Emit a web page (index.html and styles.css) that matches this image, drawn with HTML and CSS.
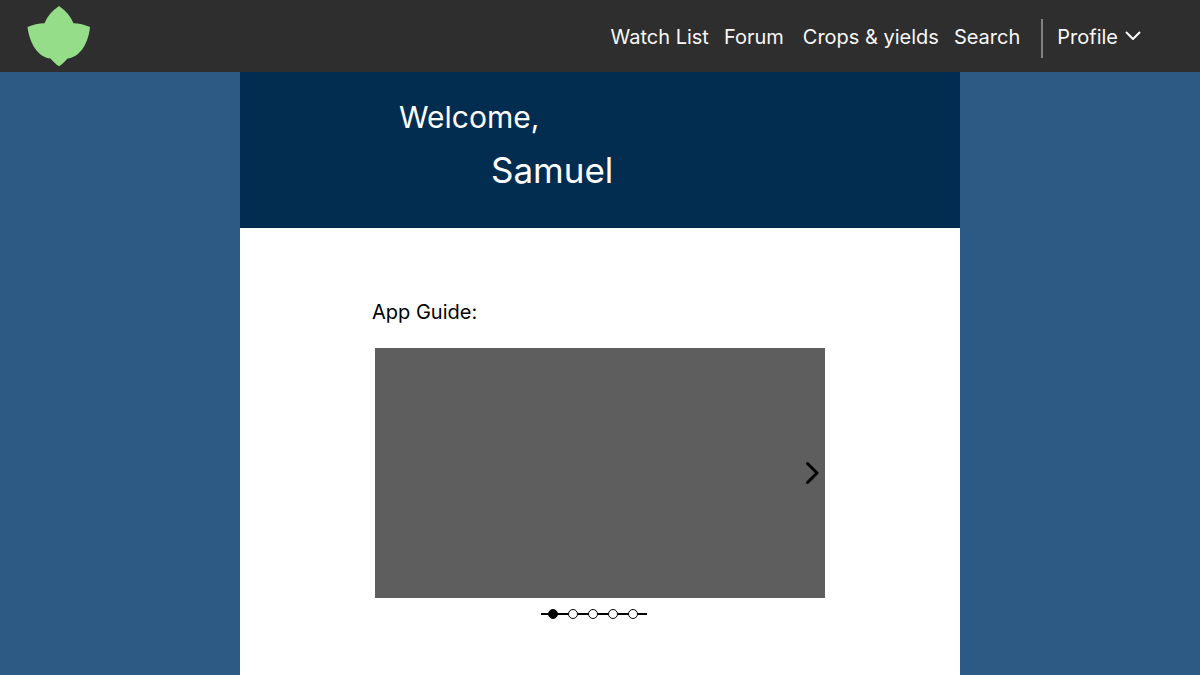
FILE: index.html
```html
<!DOCTYPE html>
<html lang="en">
<head>
<meta charset="utf-8">
<title>Home</title>
<link rel="stylesheet" href="styles.css">
</head>
<body>
<header class="topbar">
  <a class="logo" href="#" aria-label="Home">
    <svg width="64" height="62" viewBox="0 0 64 62" aria-hidden="true"><path fill="#95dd88" d="M32 0C39 5 43.500 10 46.500 17.300C52 17.500 57.500 18.800 63 21C61.500 37 53 51.500 40.500 52.500C38 55.500 35 58.500 32 60.300C29 58.500 26 55.500 23.500 52.500C11 51.500 2.500 37 .500 21C6 18.800 11.500 17.500 17.500 17.300C20.500 10 25 5 32 0Z"/></svg>
  </a>
  <nav class="nav">
    <a class="nav-link" href="#">Watch List</a>
    <a class="nav-link nav-link-forum" href="#">Forum</a>
    <a class="nav-link" href="#">Crops &amp; yields</a>
    <a class="nav-link" href="#">Search</a>
  </nav>
  <button class="profile" type="button">Profile
    <svg width="16" height="12" viewBox="0 0 16 12" aria-hidden="true"><path d="M1.500 1.500L8 8L14.500 1.500" fill="none" stroke="#fff" stroke-width="2" stroke-linecap="round" stroke-linejoin="round"/></svg>
  </button>
</header>
<main class="page">
  <h1 class="hero">
    <span class="greeting">Welcome,</span>
    <span class="name">Samuel</span>
  </h1>
  <section class="guide">
    <h2 class="guide-title">App Guide:</h2>
    <div class="slide">
      <button class="next" type="button" aria-label="Next slide">
        <svg width="14" height="24" viewBox="0 0 14 24" aria-hidden="true"><path d="M2.500 2.500L12 12L2.500 21.500" fill="none" stroke="#000" stroke-width="3" stroke-linecap="round" stroke-linejoin="round"/></svg>
      </button>
    </div>
    <div class="dots">
      <button class="dot dot-active" type="button" aria-label="Slide 1"></button>
      <button class="dot" type="button" aria-label="Slide 2"></button>
      <button class="dot" type="button" aria-label="Slide 3"></button>
      <button class="dot" type="button" aria-label="Slide 4"></button>
      <button class="dot" type="button" aria-label="Slide 5"></button>
    </div>
  </section>
</main>
</body>
</html>
```
FILE: styles.css
```css
* { box-sizing: border-box; }
body {
  margin: 0;
  min-height: 100vh;
  display: flex;
  flex-direction: column;
  background: #2c5a85;
  font-family: Inter, "Liberation Sans", sans-serif;
}
button {
  margin: 0;
  padding: 0;
  border: 0;
  background: none;
  font: inherit;
  color: inherit;
  cursor: pointer;
}
.topbar {
  display: flex;
  align-items: center;
  height: 72px;
  padding: 2px 59px 0 27px;
  background: #2e2e2e;
  color: #f8f8f8;
  font-size: 20px;
  line-height: 24px;
}
.logo { display: flex; }
.nav {
  display: flex;
  gap: 15px;
  margin-left: auto;
}
.nav-link { color: inherit; text-decoration: none; }
.nav-link-forum { margin-right: 4px; }
.profile {
  display: flex;
  align-items: center;
  gap: 7px;
  height: 39px;
  margin: 2px 0 0 21px;
  padding: 0 0 3px 14px;
  border-left: 2px solid #828282;
}
.page {
  flex: 1;
  width: 60%;
  margin: 0 auto;
  background: #fff;
}
.hero {
  display: flex;
  flex-direction: column;
  gap: 12px;
  margin: 0;
  padding: 26px 24px 35px 159px;
  border-bottom: 1px solid #02264a;
  background: #032d50;
  color: #fff;
  font-weight: 400;
}
.greeting { font-size: 30px; line-height: 38px; }
.name { padding-left: 92px; font-size: 35px; line-height: 44px; }
.guide {
  width: 450px;
  max-width: 100%;
  margin: 0 auto;
  padding: 72px 0 48px;
}
.guide-title {
  margin: 0 0 24px -3px;
  font-size: 20px;
  font-weight: 400;
  line-height: 24px;
}
.slide {
  display: flex;
  align-items: center;
  justify-content: flex-end;
  height: 250px;
  padding-right: 6px;
  background: #5e5e5e;
}
.next { display: flex; }
.dots {
  display: flex;
  gap: 10px;
  width: 106px;
  margin: 11px auto 0 166px;
  padding-left: 7px;
  background: linear-gradient(#000, #000) center / 100% 2px no-repeat;
}
.dot {
  width: 10px;
  height: 10px;
  border: 1px solid #000;
  border-radius: 50%;
  background: #fff;
}
.dot-active { background: #000; }
```
